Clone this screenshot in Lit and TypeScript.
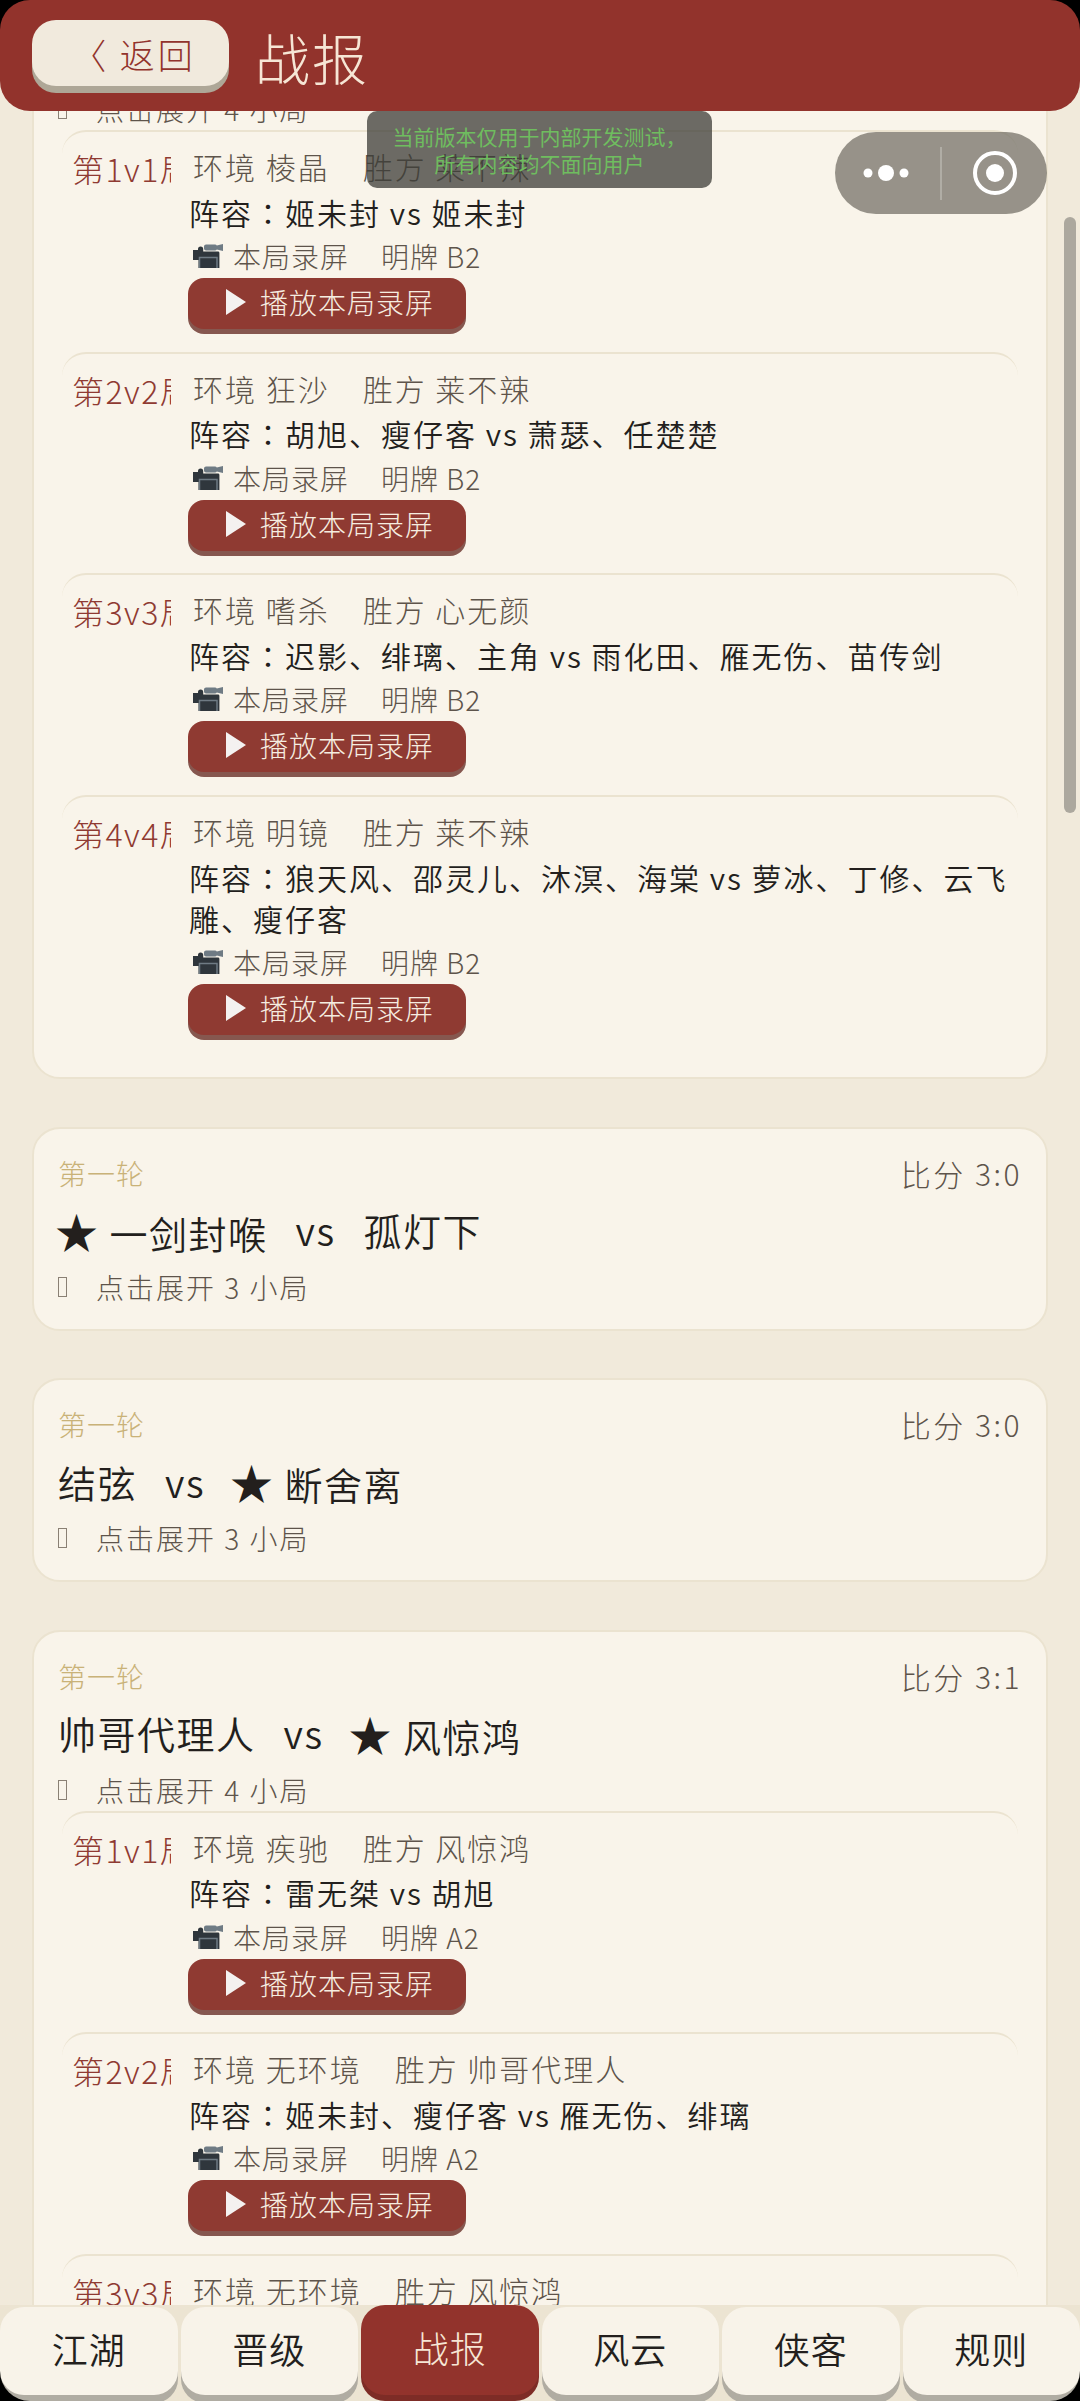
import { LitElement, html, css, svg } from "lit";
import { customElement } from "lit/decorators.js";

type Game = { no: string; env: string; win: string; lineup?: string; card?: string };
type Match = { left?: string; right?: string; leftStar?: boolean; rightStar?: boolean; score?: string; count: number; games?: Game[] };

const matches: Match[] = [
  {
    count: 4,
    games: [
      { no: "第1v1局", env: "棱晶", win: "莱不辣", lineup: "姬未封 vs 姬未封", card: "B2" },
      { no: "第2v2局", env: "狂沙", win: "莱不辣", lineup: "胡旭、瘦仔客 vs 萧瑟、任楚楚", card: "B2" },
      { no: "第3v3局", env: "嗜杀", win: "心无颜", lineup: "迟影、绯璃、主角 vs 雨化田、雁无伤、苗传剑", card: "B2" },
      { no: "第4v4局", env: "明镜", win: "莱不辣", lineup: "狼天风、邵灵儿、沐溟、海棠 vs 萝冰、丁修、云飞雕、瘦仔客", card: "B2" },
    ],
  },
  { left: "一剑封喉", right: "孤灯下", leftStar: true, score: "3:0", count: 3 },
  { left: "结弦", right: "断舍离", rightStar: true, score: "3:0", count: 3 },
  {
    left: "帅哥代理人", right: "风惊鸿", rightStar: true, score: "3:1", count: 4,
    games: [
      { no: "第1v1局", env: "疾驰", win: "风惊鸿", lineup: "雷无桀 vs 胡旭", card: "A2" },
      { no: "第2v2局", env: "无环境", win: "帅哥代理人", lineup: "姬未封、瘦仔客 vs 雁无伤、绯璃", card: "A2" },
      { no: "第3v3局", env: "无环境", win: "风惊鸿" },
    ],
  },
];

const tabs = ["江湖", "晋级", "战报", "风云", "侠客", "规则"];

const camera = svg`<svg class="cam" viewBox="0 0 30 24" aria-hidden="true">
  <path fill="#6f7b84" d="M11 2.500c0-1.200 1-2 2-2h9c.8 0 1.400.3 1.800.9L30 0v7l-6.200-1.400c-.4.6-1 .9-1.800.9h-9c-1 0-2-.8-2-2z"/>
  <path fill="#2f363c" d="M0 6h5V5.200a2.600 2.600 0 0 1 5.200 0V7.500H25c.8 0 1.400.6 1.400 1.400V24H5.500v-8H0z"/>
  <path fill="none" stroke="#6f7b84" stroke-width="1.500" d="M6.500 24v-10.500h17.500v10.500"/>
</svg>`;

@customElement("app-root")
export class AppRoot extends LitElement {
  static styles = css`
    :host { display: block; width: 1080px; height: 2401px; position: relative; overflow: hidden; background: #f1eadb; font-family: "Noto Sans CJK SC", "Noto Sans", sans-serif; color: #2b2522; }
    .list { display: flex; flex-direction: column; gap: 47.600px; padding: 0 32px; margin-top: 75px; }
    .card { background: #f9f4ea; border: 2px solid #ebe3d0; border-radius: 28px; padding: 24px 24px 25px 24px; box-sizing: border-box; }
    .card.partial { padding-top: 0; }
    .top { display: flex; justify-content: space-between; align-items: center; height: 40px; }
    .round { color: #c9b278; font-size: 28px; font-weight: 300; letter-spacing: 1px; }
    .score { color: #5e544b; font-size: 30px; font-weight: 300; letter-spacing: 2.500px; }
    .title { display: flex; align-items: center; gap: 28px; font-size: 38px; font-weight: 350; height: 50px; margin-top: 12px; letter-spacing: 1.500px; color: #231f1d; }
    .star { font-size: 43px; margin: 0 10px 0 -3px; color: #231f1d; }
    .hint { display: flex; align-items: center; color: #5e544b; font-size: 28px; font-weight: 300; margin-top: 15px; height: 34px; letter-spacing: 2px; }
    .tofu { width: 7px; height: 18px; border: 1px solid #8a8074; margin-right: 29px; }
    .games { margin: 4px 4px -5.800px 4px; display: flex; flex-direction: column; }
    .game { display: flex; min-height: 221.700px; box-sizing: border-box; border-top: 2px solid #ebe3d0; border-radius: 24px 24px 0 0; padding: 14px 0 22.700px 10px; }
    .no { width: 99px; flex: none; overflow: hidden; white-space: nowrap; color: #8f3a32; font-size: 32px; font-weight: 300; letter-spacing: 1.500px; height: 46px; line-height: 46px; margin-top: -1px; }
    .body { padding-left: 18px; min-width: 0; flex: 1; }
    .meta { display: flex; gap: 33px; color: #5e544b; font-size: 30px; font-weight: 300; letter-spacing: 2px; height: 40px; line-height: 40px; padding-left: 4px; }
    .lineup { font-size: 30px; font-weight: 350; letter-spacing: 2px; line-height: 41px; margin-top: 5.500px; color: #231f1d; }
    .colon { font-family: "Noto Sans CJK TC", sans-serif; }
    .rec { display: flex; align-items: center; color: #5e544b; font-size: 28px; font-weight: 300; letter-spacing: 1px; height: 42px; gap: 32px; padding-left: 4px; margin-top: 2.500px; }
    .rec span:first-of-type { margin-left: -22px; }
    .cam { width: 30px; height: 24px; flex: none; }
    .btn { display: flex; align-items: center; width: 278px; height: 51px; box-sizing: border-box; background: #8f3a32; border-radius: 16px; box-shadow: 0 5px 0 #86574f; color: #f6ede0; font-size: 28px; font-weight: 300; letter-spacing: 1px; padding: 0 0 3px 38px; gap: 14px; margin-top: 1px; margin-left: -1px; }
    .tri { width: 0; height: 0; border-left: 20px solid #f4f1f0; border-top: 13px solid transparent; border-bottom: 13px solid transparent; }
    .header { position: absolute; left: 0; right: 0; top: 0; height: 111px; background: #92332c; border-radius: 0 0 30px 30px; display: flex; align-items: center; padding-left: 32px; gap: 26px; }
    .back { display: flex; align-items: center; justify-content: center; box-sizing: border-box; width: 197px; height: 66px; margin-bottom: 5px; background: #f1eadd; border-radius: 24px; box-shadow: 0 7px 0 #aea797; color: #92332c; font-size: 35px; font-weight: 300; letter-spacing: 3px; padding-left: 6px; }
    .page-title { color: #f6e6d5; font-size: 55px; font-weight: 300; letter-spacing: 2px; }
    .toast { position: absolute; left: 367px; top: 111px; width: 345px; height: 77px; background: rgba(60, 60, 55, 0.75); border-radius: 10px; color: #6fbd5f; font-size: 21px; line-height: 27px; text-align: center; font-weight: 400; padding-top: 12px; box-sizing: border-box; }
    .capsule { position: absolute; left: 835px; top: 132px; width: 212px; height: 82px; border-radius: 41px; background: rgba(118, 114, 104, 0.75); }
    .capsule svg { display: block; width: 212px; height: 82px; }
    .thumb { position: absolute; left: 1064px; top: 217px; width: 12px; height: 596px; border-radius: 6px; background: #aca89e; }
    .tabs { position: absolute; left: 0; right: 0; top: 2305px; height: 96px; background: #ece4d2; display: flex; gap: 3px; }
    .tab { flex: 1; box-sizing: border-box; height: 88px; margin-top: 2px; background: #f8f3e9; border-radius: 24px; box-shadow: 0 8px 0 #b0aca2; display: flex; align-items: center; justify-content: center; font-size: 36px; font-weight: 350; letter-spacing: 1px; color: #231f1d; padding-bottom: 6px; }
    .tab.on { background: #92332c; color: #f6e6d5; margin-top: 0; height: 90px; box-shadow: 0 6px 0 #7d2c26; font-weight: 300; }
    .bezel { position: absolute; inset: 0; border-radius: 30px; box-shadow: 0 0 0 40px #000; pointer-events: none; }
  `;

  private game(g: Game) {
    return html`<div class="game">
      <div class="no">${g.no}</div>
      <div class="body">
        <div class="meta"><span>环境 ${g.env}</span><span>胜方 ${g.win}</span></div>
        ${g.lineup
          ? html`<div class="lineup">阵容<span class="colon">：</span>${g.lineup}</div>
              <div class="rec">${camera}<span>本局录屏</span><span>明牌 ${g.card}</span></div>
              <div class="btn"><i class="tri"></i><span>播放本局录屏</span></div>`
          : ""}
      </div>
    </div>`;
  }

  private match(m: Match) {
    const star = html`<span class="star">★</span>`;
    return html`<section class="card ${m.left ? "" : "partial"}">
      ${m.left
        ? html`<div class="top"><span class="round">第一轮</span><span class="score">比分 ${m.score}</span></div>
            <div class="title">
              <span>${m.leftStar ? star : ""}${m.left}</span><span>vs</span><span>${m.rightStar ? star : ""}${m.right}</span>
            </div>`
        : ""}
      <div class="hint"><i class="tofu"></i>点击展开 ${m.count} 小局</div>
      ${m.games ? html`<div class="games">${m.games.map((g) => this.game(g))}</div>` : ""}
    </section>`;
  }

  render() {
    return html`
      <main class="list">${matches.map((m) => this.match(m))}</main>
      <div class="thumb"></div>
      <header class="header">
        <div class="back">〈 返回</div>
        <div class="page-title">战报</div>
      </header>
      <div class="toast">当前版本仅用于内部开发测试，<br />所有内容均不面向用户</div>
      <div class="capsule">
        <svg viewBox="0 0 212 82" aria-hidden="true">
          <circle cx="33" cy="41" r="4.500" fill="#fff" /><circle cx="51" cy="41" r="8" fill="#fff" /><circle cx="69" cy="41" r="4.500" fill="#fff" />
          <rect x="105" y="15" width="2" height="53" fill="#b0ada5" />
          <circle cx="160" cy="41" r="20" fill="none" stroke="#fff" stroke-width="4" /><circle cx="160" cy="41" r="9" fill="#fff" />
        </svg>
      </div>
      <nav class="tabs">${tabs.map((t) => html`<div class="tab ${t === "战报" ? "on" : ""}">${t}</div>`)}</nav>
      <div class="bezel"></div>
    `;
  }
}
